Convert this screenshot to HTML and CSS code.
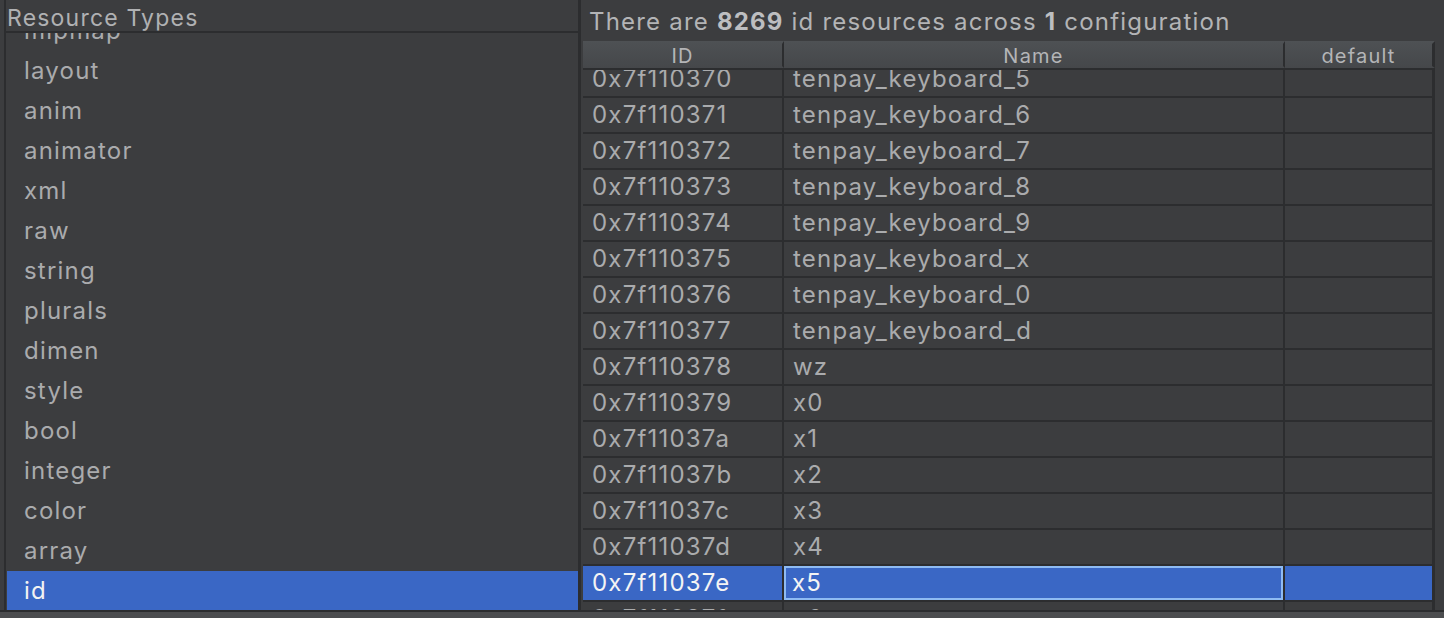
FILE: index.html
```html
<!DOCTYPE html>
<html>
<head>
  <meta charset="UTF-8" />
  <title>Resources</title>
  <link rel="stylesheet" href="styles.css">
</head>
<body>
  <div class="window">
    <div class="main">
      <aside class="types">
        <div class="types-title">Resource Types</div>
        <div class="types-scroll">
          <ul class="types-list">
            <li>mipmap</li>
            <li>layout</li>
            <li>anim</li>
            <li>animator</li>
            <li>xml</li>
            <li>raw</li>
            <li>string</li>
            <li>plurals</li>
            <li>dimen</li>
            <li>style</li>
            <li>bool</li>
            <li>integer</li>
            <li>color</li>
            <li>array</li>
            <li class="selected">id</li>
          </ul>
        </div>
      </aside>

      <section class="resources">
        <div class="summary">There are <b>8269</b> id resources across <b>1</b> configuration</div>
        <div class="grid">
          <div class="grid-head">
            <div>ID</div>
            <div>Name</div>
            <div>default</div>
          </div>
          <div class="grid-body">
            <div class="grid-rows">
              <div class="row"><div>0x7f110370</div><div>tenpay_keyboard_5</div><div></div></div>
              <div class="row"><div>0x7f110371</div><div>tenpay_keyboard_6</div><div></div></div>
              <div class="row"><div>0x7f110372</div><div>tenpay_keyboard_7</div><div></div></div>
              <div class="row"><div>0x7f110373</div><div>tenpay_keyboard_8</div><div></div></div>
              <div class="row"><div>0x7f110374</div><div>tenpay_keyboard_9</div><div></div></div>
              <div class="row"><div>0x7f110375</div><div>tenpay_keyboard_x</div><div></div></div>
              <div class="row"><div>0x7f110376</div><div>tenpay_keyboard_0</div><div></div></div>
              <div class="row"><div>0x7f110377</div><div>tenpay_keyboard_d</div><div></div></div>
              <div class="row"><div>0x7f110378</div><div>wz</div><div></div></div>
              <div class="row"><div>0x7f110379</div><div>x0</div><div></div></div>
              <div class="row"><div>0x7f11037a</div><div>x1</div><div></div></div>
              <div class="row"><div>0x7f11037b</div><div>x2</div><div></div></div>
              <div class="row"><div>0x7f11037c</div><div>x3</div><div></div></div>
              <div class="row"><div>0x7f11037d</div><div>x4</div><div></div></div>
              <div class="row selected"><div>0x7f11037e</div><div class="focus">x5</div><div></div></div>
              <div class="row"><div>0x7f11037f</div><div>x6</div><div></div></div>
            </div>
          </div>
        </div>
      </section>
    </div>
    <div class="statusbar"></div>
  </div>
</body>
</html>
```

FILE: styles.css
```css
* {
  box-sizing: border-box;
}

html, body {
  margin: 0;
  background: #3c3d3f;
  color: #aaabad;
  font-family: Inter, "Liberation Sans", sans-serif;
  font-size: 24px;
  letter-spacing: 1.2px;
}

.window {
  width: 1444px;
  height: 618px;
  overflow: hidden;
  display: flex;
  flex-direction: column;
}

.main {
  display: flex;
  height: 610px;
}

/* left list */

.types {
  width: 574px;
  margin-left: 4px;
  border-left: 2px solid #2c2d2f;
  display: flex;
  flex-direction: column;
}

.types-title {
  height: 33px;
  padding: 5px 0 0 1px;
  line-height: 26px;
  border-bottom: 2px solid #2c2d2f;
  color: #b0b1b3;
  font-size: 23px;
  white-space: nowrap;
}

.types-scroll {
  flex: 1;
  overflow: hidden;
}

.types-list {
  list-style: none;
  margin: -22px 0 0;
  padding: 0 0 0 1px;
}

.types-list li {
  height: 40px;
  line-height: 40px;
  padding-left: 17px;
}

.types-list li.selected {
  background: #3a67c5;
  color: #f2f2f2;
}

/* right table */

.resources {
  flex: 1;
  border-left: 3px solid #2c2d2f;
  padding-left: 2px;
  display: flex;
  flex-direction: column;
}

.summary {
  height: 41px;
  padding: 3px 0 0 6px;
  line-height: 38px;
  color: #b3b4b6;
  white-space: nowrap;
}

.summary b {
  color: #bdbec0;
}

.grid {
  width: 852px;
  flex: 1;
  display: flex;
  flex-direction: column;
}

.grid-head,
.row {
  display: grid;
  grid-template-columns: 201px 501px 150px;
}

.grid-head {
  height: 29px;
  border-bottom: 2px solid #2c2d2f;
  background: linear-gradient(#4e5154, #45474a);
  font-size: 20px;
  text-align: center;
  color: #b4b5b7;
}

.grid-head > div {
  border-right: 2px solid #2c2d2f;
  border-top: 3px solid transparent;
  border-bottom: 2px solid transparent;
  background-clip: padding-box;
  padding-top: 2px;
  line-height: 20px;
}

.grid-head > div:last-child {
  border-right-width: 3px;
}

.grid-body {
  flex: 1;
  overflow: hidden;
}

.grid-rows {
  margin-top: -8px;
}

.row {
  height: 36px;
}

.row > div {
  border-right: 2px solid #2c2d2f;
  border-bottom: 2px solid #2c2d2f;
  padding-left: 9px;
  line-height: 34px;
  white-space: nowrap;
}

.row > div:last-child {
  border-right-width: 3px;
}

.row.selected > div {
  background: #3a67c5;
  background-clip: padding-box;
  color: #f4f4f4;
}

.row.selected > div.focus {
  box-shadow: inset 0 0 0 2px #8ebbf3;
  padding-left: 8px;
}

.statusbar {
  height: 8px;
  border-top: 2px solid #2c2d2f;
  background: #4c4d4f;
}
```
